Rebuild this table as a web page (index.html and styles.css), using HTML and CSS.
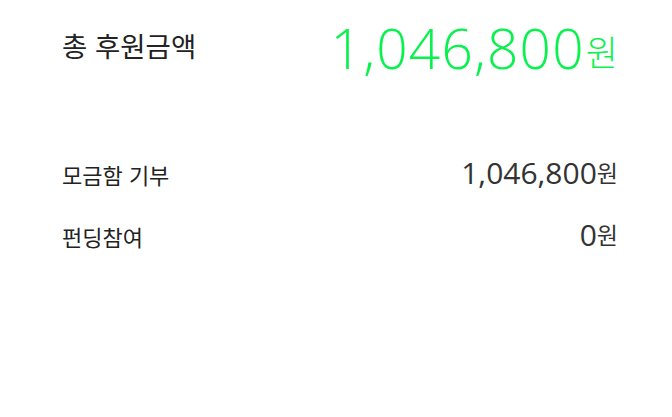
FILE: index.html
```html
<!DOCTYPE html>
<html lang="ko">
<head>
<meta charset="utf-8">
<link rel="stylesheet" href="styles.css">
</head>
<body>
<div class="wrap">
  <div class="total">
    <div class="total-label">총 후원금액</div>
    <div class="total-value"><span class="num">1,046,800</span><span class="unit">원</span></div>
  </div>
  <div class="rows">
    <div class="row">
      <div class="row-label">모금함 기부</div>
      <div class="row-value"><span class="num">1,046,800</span><span class="unit">원</span></div>
    </div>
    <div class="row">
      <div class="row-label">펀딩참여</div>
      <div class="row-value"><span class="num">0</span><span class="unit">원</span></div>
    </div>
  </div>
</div>
</body>
</html>
```
FILE: styles.css
```css
html, body { margin: 0; padding: 0; background: #fff; }
body { font-family: "Noto Sans CJK KR", "Noto Sans", sans-serif; color: #222; }
.wrap { padding: 18px 54px 0 62px; }
.total { display: flex; justify-content: space-between; align-items: center; }
.total-label { font-size: 27.5px; line-height: 1; color: #222; }
.total-value { color: #08f24e; line-height: 55px; height: 55px; font-size: 55px; white-space: nowrap; }
.num { font-family: "Open Sans", "Noto Sans", sans-serif; }
.total-value .num { font-size: 55px; font-weight: 300; letter-spacing: 1.2px; }
.total-value .unit { font-size: 35px; font-weight: 300; margin-left: 1px; vertical-align: 3px; }
.rows { margin-top: 84px; display: flex; flex-direction: column; gap: 27px; }
.row { display: flex; justify-content: space-between; align-items: baseline; line-height: 30px; }
.row-label { font-size: 22px; color: #222; }
.row-value { color: #333; white-space: nowrap; }
.row-value .num { font-size: 30px; font-weight: 400; }
.row-value .unit { font-size: 23px; vertical-align: 2px; }
```
